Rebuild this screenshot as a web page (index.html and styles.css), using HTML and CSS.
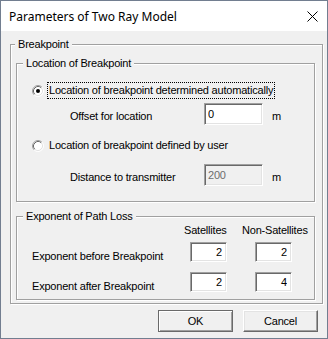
FILE: index.html
```html
<!DOCTYPE html>
<html lang="en">
<head>
  <meta charset="UTF-8">
  <meta name="viewport" content="width=device-width, initial-scale=1.0">
  <title>Parameters of Two Ray Model</title>
  <link rel="stylesheet" href="styles.css">
</head>
<body>
  <div class="dialog">
    <div class="titlebar">
      <span class="title">Parameters of Two Ray Model</span>
      <svg class="close" width="11" height="11" viewBox="0 0 11 11">
        <path d="M0.5 0.5 L10.5 10.5 M10.5 0.5 L0.5 10.5" stroke="#000" stroke-width="1" fill="none"/>
      </svg>
    </div>

    <div class="client">
      <div class="group outer">
        <span class="group-title">Breakpoint</span>

        <div class="group loc">
          <span class="group-title">Location of Breakpoint</span>

          <div class="radio-row first">
            <svg class="radio" width="12" height="12" viewBox="0 0 12 12">
              <circle cx="6" cy="6" r="5" fill="#fff"/>
              <path d="M2.11 9.89 A5.5 5.5 0 0 1 9.89 2.11" stroke="#a0a0a0" fill="none"/>
              <path d="M9.89 2.11 A5.5 5.5 0 0 1 2.11 9.89" stroke="#fff" fill="none"/>
              <path d="M2.82 9.18 A4.5 4.5 0 0 1 9.18 2.82" stroke="#696969" fill="none"/>
              <path d="M9.18 2.82 A4.5 4.5 0 0 1 2.82 9.18" stroke="#e3e3e3" fill="none"/>
              <circle cx="6" cy="6" r="2" fill="#000"/>
            </svg>
            <span class="radio-label focus">Location of breakpoint determined automatically</span>
          </div>
          <div class="field-row first">
            <span class="field-label">Offset for location</span>
            <input class="edit wide" type="text" value="0">
            <span class="unit">m</span>
          </div>

          <div class="radio-row second">
            <svg class="radio" width="12" height="12" viewBox="0 0 12 12">
              <circle cx="6" cy="6" r="5" fill="#fff"/>
              <path d="M2.11 9.89 A5.5 5.5 0 0 1 9.89 2.11" stroke="#a0a0a0" fill="none"/>
              <path d="M9.89 2.11 A5.5 5.5 0 0 1 2.11 9.89" stroke="#fff" fill="none"/>
              <path d="M2.82 9.18 A4.5 4.5 0 0 1 9.18 2.82" stroke="#696969" fill="none"/>
              <path d="M9.18 2.82 A4.5 4.5 0 0 1 2.82 9.18" stroke="#e3e3e3" fill="none"/>
            </svg>
            <span class="radio-label">Location of breakpoint defined by user</span>
          </div>
          <div class="field-row second">
            <span class="field-label">Distance to transmitter</span>
            <input class="edit wide" type="text" value="200" disabled>
            <span class="unit">m</span>
          </div>
        </div>

        <div class="group exp">
          <span class="group-title">Exponent of Path Loss</span>

          <div class="col-heads">
            <span class="col-sat">Satellites</span>
            <span>Non-Satellites</span>
          </div>
          <div class="exp-row">
            <span class="exp-label">Exponent before Breakpoint</span>
            <input class="edit num" type="text" value="2">
            <input class="edit num" type="text" value="2">
          </div>
          <div class="exp-row">
            <span class="exp-label">Exponent after Breakpoint</span>
            <input class="edit num" type="text" value="2">
            <input class="edit num" type="text" value="4">
          </div>
        </div>
      </div>

      <div class="buttons">
        <button class="btn default">OK</button>
        <button class="btn">Cancel</button>
      </div>
    </div>
  </div>
</body>
</html>
```

FILE: styles.css
```css
* {
  box-sizing: border-box;
}
body {
  margin: 0;
  background: #f0f0f0;
  font-family: "Liberation Sans", Arial, sans-serif;
  font-size: 11px;
  letter-spacing: -0.2px;
  color: #000;
}
.dialog {
  width: 328px;
  height: 339px;
  border: 1px solid #727e90;
  background: #f0f0f0;
  display: flex;
  flex-direction: column;
}
.titlebar {
  height: 30px;
  flex: none;
  background: #fff;
  display: flex;
  align-items: center;
  justify-content: space-between;
  padding: 0 9px 0 8px;
}
.title {
  font-family: "Noto Sans", "Liberation Sans", sans-serif;
  font-size: 12px;
  letter-spacing: 0;
}
.close {
  display: block;
}
.client {
  flex: 1;
  padding: 13px 4px 0 9px;
}

/* etched group boxes */
.group {
  position: relative;
  border: 1px solid #a0a0a0;
  box-shadow: 1px 1px 0 #fff, inset 1px 1px 0 #fff;
}
.group-title {
  position: absolute;
  top: -7px;
  line-height: 13px;
  padding: 0 3px;
  background: #f0f0f0;
  white-space: nowrap;
}
.outer {
  width: 313px;
  height: 260px;
  padding-top: 18px;
}
.outer > .group-title {
  left: 4px;
}
.loc {
  margin: 0 7px 0 5px;
  height: 139px;
  padding-top: 18px;
}
.loc > .group-title,
.exp > .group-title {
  left: 6px;
}

.radio-row {
  display: flex;
  align-items: center;
  height: 17px;
  padding-left: 15px;
}
.radio-row.second {
  margin-top: 12px;
}
.radio {
  display: block;
  margin-right: 3px;
}
.radio-label {
  line-height: 15px;
  padding: 0 1px;
  border: 1px solid transparent;
}
.radio-label.focus {
  border: 1px dotted #000;
}

.field-row {
  display: flex;
  align-items: flex-start;
  padding-left: 53px;
  margin-top: 4px;
}
.field-row.second {
  margin-top: 10px;
}
.field-label {
  width: 134px;
  padding-top: 7px;
  line-height: 13px;
}
.unit {
  margin-left: 9px;
  padding-top: 7px;
  line-height: 13px;
}

/* sunken edit boxes */
.edit {
  margin: 0;
  font-family: inherit;
  font-size: 11px;
  letter-spacing: -0.2px;
  color: #000;
  background: #fff;
  border: 1px solid;
  border-color: #a0a0a0 #fff #fff #a0a0a0;
  box-shadow: inset 1px 1px 0 #696969, inset -1px -1px 0 #e3e3e3;
  outline: none;
}
.edit.wide {
  width: 59px;
  height: 22px;
  padding: 0 3px;
}
.edit:disabled {
  background: #f0f0f0;
  color: #6d6d6d;
}
.edit.num {
  width: 37px;
  height: 20px;
  padding: 0 4px;
  text-align: right;
}

.exp {
  margin: 14px 7px 0 5px;
  height: 84px;
  padding-left: 15px;
}
.col-heads {
  display: flex;
  margin-top: 7px;
  padding-left: 152px;
  line-height: 13px;
  white-space: nowrap;
}
.col-sat {
  width: 58px;
}
.exp-row {
  display: grid;
  grid-template-columns: 130px 37px 36px;
  column-gap: 28px;
  align-items: start;
  margin-top: 5px;
}
.exp-row + .exp-row {
  margin-top: 9px;
}
.exp-label {
  padding-top: 8px;
  line-height: 13px;
  white-space: nowrap;
}

/* push buttons */
.buttons {
  display: flex;
  justify-content: flex-end;
  gap: 10px;
  margin-top: 6px;
  padding-right: 5px;
}
.btn {
  width: 75px;
  height: 22px;
  margin: 0;
  padding: 0;
  font-family: inherit;
  font-size: 11px;
  letter-spacing: -0.2px;
  color: #000;
  background: #f0f0f0;
  border: 1px solid;
  border-color: #fff #696969 #696969 #fff;
  box-shadow: inset -1px -1px 0 #a0a0a0, inset 1px 1px 0 #e3e3e3;
}
.btn.default {
  border-color: #6a6a6a;
  box-shadow: inset 1px 1px 0 #fff, inset -1px -1px 0 #a0a0a0;
}
```
